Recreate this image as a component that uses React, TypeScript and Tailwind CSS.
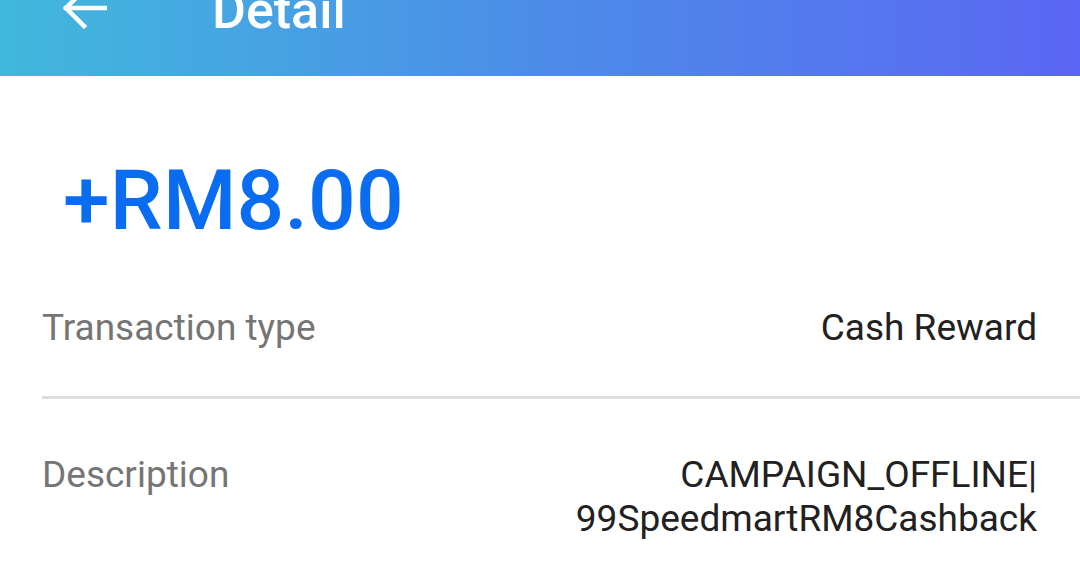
export default function App() {
  return (
    <div className="h-[587px] w-[1080px] overflow-hidden bg-white" style={{ fontFamily: 'Roboto, "Noto Sans", sans-serif' }}>
      <header className="h-[76px] overflow-hidden bg-gradient-to-r from-[#40b8dc] via-[#4c8ce8] to-[#5a66f3]">
        <div className="-mt-[42px] flex h-[100px] items-center">
          <svg className="ml-[61px] h-[46px] w-[46px]" viewBox="0 0 46 46" fill="none" stroke="white" strokeWidth="4.5" strokeLinecap="square">
            <path d="M5 23 H44" />
            <path d="M23 5 L5 23 L23 41" />
          </svg>
          <h1 className="ml-[105px] translate-y-[3px] text-[52px] font-medium leading-none text-white">Detail</h1>
        </div>
      </header>

      <div className="pl-[63px] pt-[83px] leading-none">
        <span className="text-[84px] font-medium tracking-[0.2px] text-[#0a6cf0]">+RM8.00</span>
      </div>

      <div className="pl-[42px]">
        <div className="flex items-start justify-between pr-[43px] pt-[63px] pb-[46px] text-[37px] leading-[44px]">
          <span className="text-[#757575]">Transaction type</span>
          <span className="text-[#212121]">Cash Reward</span>
        </div>
        <div className="h-[3px] bg-[#dedede]" />
        <div className="flex items-start justify-between pr-[43px] pt-[54px] text-[37px] leading-[44px]">
          <span className="text-[#757575]">Description</span>
          <span className="text-right text-[#212121]">
            CAMPAIGN_OFFLINE|
            <br />
            99SpeedmartRM8Cashback
          </span>
        </div>
      </div>
    </div>
  )
}
